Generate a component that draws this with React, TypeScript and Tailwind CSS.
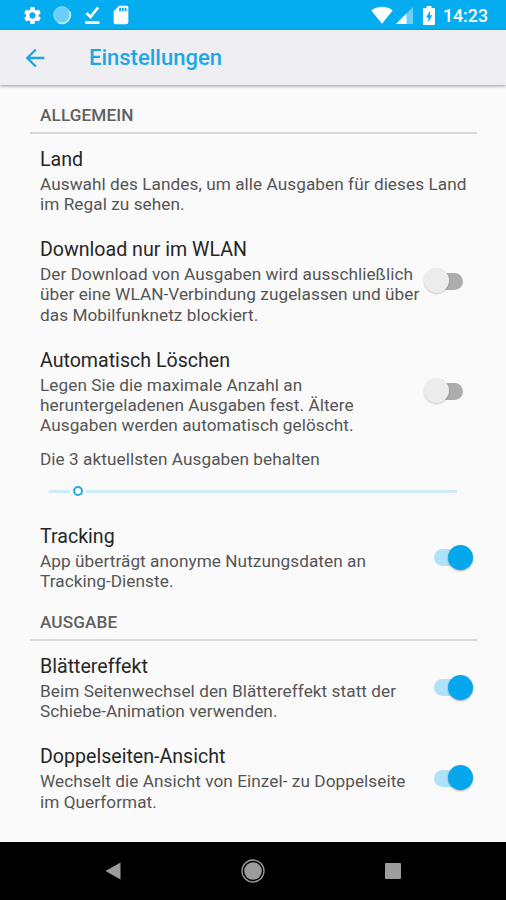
import { useState } from 'react'
import clsx from 'clsx'
import { MdArrowBack, MdSettings, MdSdCard } from 'react-icons/md'

interface ToggleProps {
  label: string
  checked: boolean
  onChange: (value: boolean) => void
}

function Toggle({ label, checked, onChange }: ToggleProps) {
  return (
    <button
      type="button"
      role="switch"
      aria-checked={checked}
      aria-label={label}
      onClick={() => onChange(!checked)}
      className="relative flex h-[26px] w-[49px] shrink-0 items-center justify-center"
    >
      <span
        className={clsx(
          'h-[17px] w-[29px] rounded-full',
          checked ? 'bg-[#ade2f9]' : 'bg-[#acacac]'
        )}
      />
      <span
        className={clsx(
          'absolute top-0 size-[25px] rounded-full',
          checked
            ? 'right-0 bg-[#04a7ec] shadow-[0_1px_2px_rgba(0,0,0,0.35)]'
            : 'left-0 bg-[#ececec] shadow-[0_1px_2px_rgba(0,0,0,0.2)]'
        )}
      />
    </button>
  )
}

interface SettingProps {
  title: string
  lines: string[]
  checked?: boolean
}

function Setting({ title, lines, checked }: SettingProps) {
  const [on, setOn] = useState(checked ?? false)

  return (
    <div className="flex items-center justify-between pl-10 pr-[33px]">
      <div className="whitespace-nowrap">
        <h3 className="mb-px text-[19.6px] leading-[26px] text-[#262626]">{title}</h3>
        <p className="text-[17.2px] leading-[20.2px] tracking-[0.06px] text-[#555]">
          {lines.map(line => (
            <span key={line} className="block">{line}</span>
          ))}
        </p>
      </div>
      {checked !== undefined && <Toggle label={title} checked={on} onChange={setOn} />}
    </div>
  )
}

function SectionHeader({ children }: { children: string }) {
  return (
    <h2 className="ml-[30px] mr-[29px] h-[29px] border-b-2 border-[#d9d9d9] pl-2.5 text-[17.2px] font-medium leading-5 tracking-[0.1px] text-[#606060]">
      {children}
    </h2>
  )
}

function StatusBar() {
  return (
    <div className="flex h-[30px] shrink-0 items-center bg-[#03adef] pl-[22px] pr-[18px] text-white">
      <MdSettings size={21} />
      <svg className="ml-[9px]" width="20" height="20" viewBox="0 0 20 20">
        <circle cx="10" cy="10" r="8.5" fill="#6bcef6" />
        <path d="M17.2 6.2A8.2 8.2 0 0 1 6 17.2" fill="none" stroke="#d5f1fd" strokeWidth="1.8" />
        <circle cx="10" cy="10" r="8.2" fill="none" stroke="#9cdff9" strokeWidth="0.8" />
      </svg>
      <svg className="ml-[11px]" width="18" height="20" viewBox="0 0 18 20">
        <path d="M3.5 8l4 4L15 2.5M2 17.7h14.5" fill="none" stroke="currentColor" strokeWidth="2.7" />
      </svg>
      <MdSdCard className="ml-[9px]" size={22} />
      <svg className="ml-auto" width="22" height="18" viewBox="0 0 22 18">
        <path d="M0.3 4.5C6.5-.4 15.5-.4 21.7 4.5L11 17.8z" fill="currentColor" />
      </svg>
      <svg className="ml-[3px] mt-px" width="17" height="17" viewBox="0 0 17 17">
        <path d="M0 17L17 0v17z" fill="#6bcff7" />
        <path d="M0 17L10.5 6.500V17z" fill="currentColor" />
      </svg>
      <svg className="ml-[10px]" width="12" height="19" viewBox="0 0 12 19">
        <path d="M3.500 0h5v2H11q1 0 1 1v15q0 1-1 1H1q-1 0-1-1V3q0-1 1-1h2.500z" fill="currentColor" />
        <path d="M7 4.800L3 11.500h2.300v4.700l4-6.900H7z" fill="#03adef" />
      </svg>
      <span className="ml-2 mt-px text-[17.8px] font-medium leading-5">14:23</span>
    </div>
  )
}

export default function App() {
  return (
    <div className="flex h-[900px] w-[506px] flex-col overflow-hidden bg-[#fafafa] font-['Roboto',sans-serif]">
      <StatusBar />

      {/* Toolbar */}
      <header className="flex h-[55px] shrink-0 items-center bg-[#eeeef3] pl-[21px] text-[#1ea7e3] shadow-[0_1px_3px_rgba(0,0,0,0.4)]">
        <button type="button" aria-label="Zurück">
          <MdArrowBack size={28} />
        </button>
        <h1 className="ml-10 text-[22px] font-medium leading-7">Einstellungen</h1>
      </header>

      <main className="flex flex-1 flex-col pt-5">
        <SectionHeader>ALLGEMEIN</SectionHeader>
        <div className="flex flex-col gap-[22.8px] pt-[13px]">
          <Setting
            title="Land"
            lines={['Auswahl des Landes, um alle Ausgaben für dieses Land', 'im Regal zu sehen.']}
          />
          <Setting
            title="Download nur im WLAN"
            lines={[
              'Der Download von Ausgaben wird ausschließlich',
              'über eine WLAN-Verbindung zugelassen und über',
              'das Mobilfunknetz blockiert.',
            ]}
            checked={false}
          />
          <Setting
            title="Automatisch Löschen"
            lines={[
              'Legen Sie die maximale Anzahl an',
              'heruntergeladenen Ausgaben fest. Ältere',
              'Ausgaben werden automatisch gelöscht.',
            ]}
            checked={false}
          />
        </div>

        {/* Number of issues to keep */}
        <div className="pt-[13.8px]">
          <p className="pl-10 text-[17.2px] leading-5 tracking-[0.06px] text-[#555]">Die 3 aktuellsten Ausgaben behalten</p>
          <div className="mx-[49px] mt-4 flex h-3 items-center gap-[3px]">
            <span className="h-[3px] w-[21px] bg-[#cdebf7]" />
            <span className="size-[10px] rounded-full border-[2.5px] border-[#22abe6]" />
            <span className="h-[3px] flex-1 bg-[#cdebf7]" />
          </div>
        </div>

        <div className="pb-[20.700px] pt-[26.800px]">
          <Setting
            title="Tracking"
            lines={['App überträgt anonyme Nutzungsdaten an', 'Tracking-Dienste.']}
            checked
          />
        </div>

        <SectionHeader>AUSGABE</SectionHeader>
        <div className="flex flex-col gap-[22.8px] pt-[13.2px]">
          <Setting
            title="Blättereffekt"
            lines={['Beim Seitenwechsel den Blättereffekt statt der', 'Schiebe-Animation verwenden.']}
            checked
          />
          <Setting
            title="Doppelseiten-Ansicht"
            lines={['Wechselt die Ansicht von Einzel- zu Doppelseite', 'im Querformat.']}
            checked
          />
        </div>
      </main>

      {/* Android navigation */}
      <nav className="flex h-[58px] shrink-0 items-center justify-between bg-black pl-[105px] pr-[105px] text-[#9c9c9c]">
        <svg width="16" height="18" viewBox="0 0 17 18">
          <path d="M0.500 9L16.500 0v18z" fill="currentColor" />
        </svg>
        <svg width="24" height="24" viewBox="0 0 24 24">
          <circle cx="12" cy="12" r="11" fill="none" stroke="currentColor" strokeWidth="1.3" />
          <circle cx="12" cy="12" r="8.8" fill="currentColor" />
        </svg>
        <span className="size-4 rounded-[1px] bg-[#9c9c9c]" />
      </nav>
    </div>
  )
}
